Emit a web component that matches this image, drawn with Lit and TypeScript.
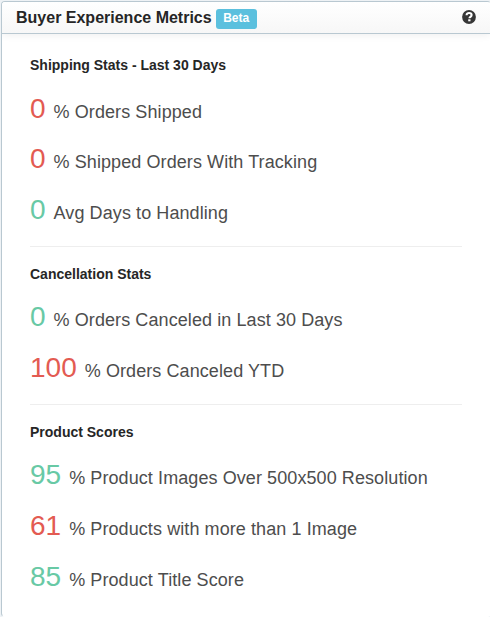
import { LitElement, html, css } from "lit";
import { customElement } from "lit/decorators.js";

type Tone = "good" | "bad";
interface Metric { value: number; label: string; tone: Tone; }
interface Group { id: string; title: string; metrics: Metric[]; }

const GROUPS: Group[] = [
  { id: "shipping", title: "Shipping Stats - Last 30 Days", metrics: [
    { value: 0, label: "% Orders Shipped", tone: "bad" },
    { value: 0, label: "% Shipped Orders With Tracking", tone: "bad" },
    { value: 0, label: "Avg Days to Handling", tone: "good" },
  ] },
  { id: "cancellation", title: "Cancellation Stats", metrics: [
    { value: 0, label: "% Orders Canceled in Last 30 Days", tone: "good" },
    { value: 100, label: "% Orders Canceled YTD", tone: "bad" },
  ] },
  { id: "product", title: "Product Scores", metrics: [
    { value: 95, label: "% Product Images Over 500x500 Resolution", tone: "good" },
    { value: 61, label: "% Products with more than 1 Image", tone: "bad" },
    { value: 85, label: "% Product Title Score", tone: "good" },
  ] },
];

@customElement("app-root")
export class AppRoot extends LitElement {
  static styles = css`
    :host {
      display: block;
      box-sizing: border-box;
      width: 493px;
      height: 617px;
      padding: 1px 2px 0 1px;
      overflow: hidden;
      background: linear-gradient(to right, #eef2f5 490px, #fff 490px);
      font-family: "Liberation Sans", Arial, sans-serif;
    }
    .panel {
      box-sizing: border-box;
      width: 490px;
      height: 616px;
      border: 1px solid #b9c8d1;
      border-right-color: #fff;
      border-bottom-color: #fff;
      border-radius: 4px;
      background: #fff;
      overflow: hidden;
    }
    .header {
      display: flex;
      align-items: center;
      box-sizing: border-box;
      height: 32px;
      padding: 0 13px 0 14px;
      border-bottom: 1px solid #b9c8d1;
      background: linear-gradient(#fff, #f7f7f7);
      box-shadow: 0 1px 8px rgba(0, 0, 0, 0.07);
    }
    .title {
      margin: 0;
      font-size: 16px;
      line-height: 30px;
      font-weight: bold;
      color: #262626;
      white-space: nowrap;
    }
    .badge {
      box-sizing: border-box;
      width: 41px;
      height: 20px;
      margin: 2px auto 0 4px;
      border-radius: 3px;
      background: #5bc0de;
      color: #fff;
      font-size: 12px;
      font-weight: bold;
      line-height: 18px;
      text-align: center;
    }
    .help { display: block; width: 14px; height: 14px; margin: 0 1px 1px 0; }
    .body { padding: 0 28px 0 28px; }
    .group { height: 157px; border-bottom: 1px solid #eee; }
    .group.shipping { height: 212px; }
    .group.product { border-bottom: 0; }
    .subtitle {
      margin: 0;
      padding-top: 19px;
      font-size: 14px;
      line-height: 16px;
      font-weight: bold;
      color: #262626;
    }
    .shipping .subtitle { padding-top: 23px; }
    .metrics { margin: 0; padding: 10px 0 0; list-style: none; }
    .shipping .metrics { padding-top: 11px; }
    .metric {
      display: flex;
      align-items: baseline;
      height: 51px;
      line-height: 50px;
      white-space: nowrap;
    }
    .shipping .metric:first-child { height: 50px; }
    .value { margin-right: 8px; font-size: 28px; }
    .good { color: #68c9a5; }
    .bad { color: #e35b52; }
    .label { font-size: 18px; letter-spacing: 0.085px; color: #4d4d4d; }
  `;

  render() {
    return html`
      <section class="panel">
        <header class="header">
          <h1 class="title">Buyer Experience Metrics</h1>
          <span class="badge">Beta</span>
          <svg class="help" viewBox="0 0 14 14" role="img" aria-label="Help">
            <circle cx="7" cy="7" r="6.9" fill="#363636" />
            <path d="M4.6 5.3C4.6 3.7 5.6 3 7.1 3c1.5 0 2.5.8 2.5 2.1 0 1.8-2.1 1.8-2.1 3.2"
              fill="none" stroke="#fff" stroke-width="2.1" />
            <rect x="6.2" y="9.3" width="2.3" height="2" fill="#fff" />
          </svg>
        </header>
        <div class="body">
          ${GROUPS.map((g) => html`
            <section class="group ${g.id}">
              <h2 class="subtitle">${g.title}</h2>
              <ul class="metrics">
                ${g.metrics.map((m) => html`
                  <li class="metric">
                    <span class="value ${m.tone}">${m.value}</span>
                    <span class="label">${m.label}</span>
                  </li>`)}
              </ul>
            </section>`)}
        </div>
      </section>
    `;
  }
}
